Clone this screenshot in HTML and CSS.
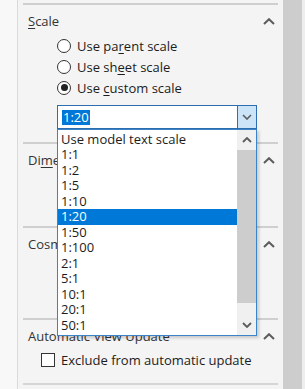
FILE: index.html
```html
<!DOCTYPE html>
<html>
<head>
<meta charset="utf-8">
<link rel="stylesheet" href="styles.css">
</head>
<body>
<div class="app">
  <div class="gutter"></div>
  <div class="panel">
    <section class="group group-scale">
      <div class="group-head">
        <span class="title"><u>S</u>cale</span>
        <svg class="chev" width="12" height="7" viewBox="0 0 12 7"><polyline points="1,6 6,1.2 11,6" fill="none" stroke="#5c5c5c" stroke-width="2"/></svg>
      </div>
      <div class="radios">
        <label class="radio"><span class="circle"></span><span class="lbl">Use pa<u>r</u>ent scale</span></label>
        <label class="radio"><span class="circle"></span><span class="lbl">Use sh<u>e</u>et scale</span></label>
        <label class="radio"><span class="circle on"></span><span class="lbl">Use <u>c</u>ustom scale</span></label>
      </div>
      <div class="combo-wrap">
        <div class="combo">
          <span class="combo-text"><span class="sel">1:20</span></span>
          <span class="combo-btn">
            <svg width="10" height="6" viewBox="0 0 10 6"><polyline points="1,1 5,5 9,1" fill="none" stroke="#5c5c5c" stroke-width="1.6"/></svg>
          </span>
        </div>
        <div class="dropdown">
          <ul class="options">
            <li>Use model text scale</li>
            <li>1:1</li>
            <li>1:2</li>
            <li>1:5</li>
            <li>1:10</li>
            <li class="active">1:20</li>
            <li>1:50</li>
            <li>1:100</li>
            <li>2:1</li>
            <li>5:1</li>
            <li>10:1</li>
            <li>20:1</li>
            <li>50:1</li>
          </ul>
          <div class="list-scroll">
            <span class="arrow">
              <svg width="10" height="6" viewBox="0 0 10 6"><polyline points="1,5 5,1 9,5" fill="none" stroke="#5c5c5c" stroke-width="1.8"/></svg>
            </span>
            <div class="list-thumb"></div>
            <div class="list-track"></div>
            <span class="arrow">
              <svg width="10" height="6" viewBox="0 0 10 6"><polyline points="1,1 5,5 9,1" fill="none" stroke="#5c5c5c" stroke-width="1.8"/></svg>
            </span>
          </div>
        </div>
      </div>
    </section>
    <section class="group group-dim">
      <div class="group-head">
        <span class="title">Di<u>m</u>ension Text</span>
        <svg class="chev" width="12" height="7" viewBox="0 0 12 7"><polyline points="1,6 6,1.2 11,6" fill="none" stroke="#5c5c5c" stroke-width="2"/></svg>
      </div>
      <div class="group-body body-dim"></div>
    </section>
    <section class="group group-cos">
      <div class="group-head">
        <span class="title">Cosmetic Thread Display</span>
        <svg class="chev" width="12" height="7" viewBox="0 0 12 7"><polyline points="1,6 6,1.2 11,6" fill="none" stroke="#5c5c5c" stroke-width="2"/></svg>
      </div>
      <div class="group-body body-cos"></div>
    </section>
    <section class="group group-auto">
      <div class="group-head">
        <span class="title">Automatic View Update</span>
        <svg class="chev" width="12" height="7" viewBox="0 0 12 7"><polyline points="1,6 6,1.2 11,6" fill="none" stroke="#5c5c5c" stroke-width="2"/></svg>
      </div>
      <label class="check"><span class="box"></span><span class="lbl">Exclude from automatic update</span></label>
    </section>
    <div class="rule"></div>
  </div>
  <div class="vscroll"></div>
  <div class="edge"></div>
</div>
</body>
</html>
```
FILE: styles.css
```css
* { box-sizing: border-box; }
html, body { margin: 0; padding: 0; }
body {
  width: 305px;
  height: 389px;
  overflow: hidden;
  font-family: "Open Sans", "Noto Sans", sans-serif;
  font-size: 13px;
  color: #1c1c1c;
  background: #f4f4f4;
}
u { text-decoration: underline; text-underline-offset: 2px; }
.app {
  display: flex;
  height: 389px;
}
.gutter {
  width: 18px;
  background: #f8f8f8;
  border-right: 1px solid #dadada;
}
.panel {
  width: 265px;
  padding: 3px 5px 0;
  background: #f4f4f4;
}
.vscroll {
  width: 19px;
  background: #cdcdcd;
}
.edge {
  width: 3px;
  background: #eeeeee;
}
.group {
  border-top: 2px solid #cfcfcf;
}
.rule {
  border-top: 2px solid #d6d6d6;
}
.group-head {
  display: flex;
  align-items: center;
  justify-content: space-between;
  height: 20px;
  margin-top: 6px;
  padding: 0 3px 0 5px;
  line-height: 20px;
  font-size: 13px;
  color: #333;
  white-space: nowrap;
}
.radios {
  display: flex;
  flex-direction: column;
  padding-top: 4px;
  padding-left: 34px;
}
.radio {
  display: flex;
  align-items: center;
  gap: 6px;
  height: 21px;
  font-size: 13px;
  white-space: nowrap;
}
.circle {
  width: 14px;
  height: 14px;
  border: 1px solid #333;
  border-radius: 50%;
  background: #fff;
  display: flex;
  align-items: center;
  justify-content: center;
}
.circle.on::after {
  content: "";
  width: 7px;
  height: 7px;
  border-radius: 50%;
  background: #222;
}
.combo-wrap {
  position: relative;
  margin: 7px 0 0 34px;
  width: 200px;
  padding-bottom: 13px;
}
.combo {
  display: flex;
  height: 24px;
  border: 1px solid #2e6eb0;
  background: #fff;
}
.combo-text {
  flex: 1;
  display: flex;
  align-items: center;
  padding-left: 4px;
}
.sel {
  background: #0078d7;
  color: #fff;
  line-height: 15px;
  padding: 0 1px;
  font-size: 13px;
}
.combo-btn {
  width: 19px;
  background: #cce4f7;
  border-left: 1px solid #2e6eb0;
  display: flex;
  align-items: center;
  justify-content: center;
}
.dropdown {
  position: absolute;
  left: 0;
  top: 24px;
  width: 200px;
  height: 207px;
  display: flex;
  background: #fff;
  border: 1px solid #3c84c8;
  box-shadow: 2px 2px 3px rgba(0,0,0,0.18);
  z-index: 5;
}
.options {
  list-style: none;
  margin: 0;
  padding: 1.5px 0 0;
  flex: 1;
}
.options li {
  height: 15.5px;
  line-height: 15.5px;
  padding-left: 3px;
  font-size: 13px;
  color: #1c1c1c;
}
.options li.active {
  background: #0078d7;
  color: #fff;
}
.list-scroll {
  width: 19px;
  display: flex;
  flex-direction: column;
  background: #f0f0f0;
}
.arrow {
  height: 20px;
  display: flex;
  align-items: center;
  justify-content: center;
}
.list-thumb {
  height: 153px;
  background: #cdcdcd;
}
.list-track {
  flex: 1;
}
.group-body.body-dim { height: 56px; }
.group-body.body-cos { height: 64px; }
.check {
  display: flex;
  align-items: center;
  gap: 6px;
  height: 20px;
  margin-top: 4px;
  margin-bottom: 13px;
  padding-left: 18px;
  font-size: 13px;
  white-space: nowrap;
}
.box {
  width: 14px;
  height: 14px;
  border: 1px solid #333;
  background: #fff;
}
```
